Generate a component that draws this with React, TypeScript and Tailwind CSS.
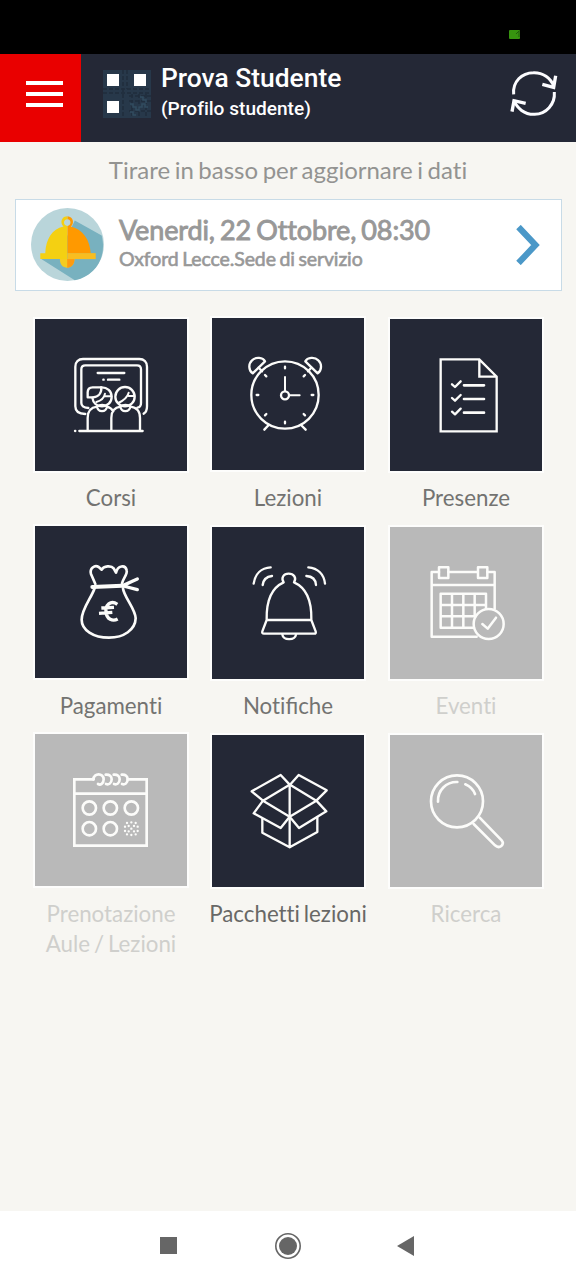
import { Fragment } from 'react';
import type { ReactNode } from 'react';

function StudentsIcon() {
  return (
    <g strokeWidth="7">
      <path d="M181 312 C162 312 151 304 151 289 V170 C151 156 160 147 174 147 H343 C357 147 366 156 366 170 V289 C366 301 364 307 356 311" />
      <path d="M190 294 C175 293 169 289 169 279 V178 C169 170 173 166 181 166 H336 C344 166 348 170 348 178 V279 C348 287 345 292 337 293" />
      <path d="M218 189 H298 M249 209 H283 M163 363 H353 M150 363 H151 M235 209 H236" />
      <path d="M188 361 V324 C188 303 199 292 216 290 M246 290 C254 292 261 297 265 304 M259 361 V324 C259 303 270 292 287 290 M316 290 C334 292 345 303 345 324 V361" />
      <path d="M216 290 C219 308 243 308 246 290 C239 283 224 283 216 290 Z M286 290 C289 308 313 308 316 290 C309 283 294 283 286 290 Z" />
      <path d="M228 232 C247 231 260 244 260 260 C260 277 247 289 231 289 C215 289 204 278 202 263" />
      <circle cx="300" cy="260" r="29" />
      <path d="M203 262 H188 V247 C188 238 194 232 203 232 H229 C230 250 220 261 203 262 Z" />
      <path d="M214 276 C227 273 237 266 240 251 M239 259 H259 M280 279 C296 271 308 260 311 248 M311 258 H328" strokeWidth="6" />
    </g>
  );
}

function AlarmIcon() {
  return (
    <g strokeWidth="7">
      <circle cx="246" cy="255" r="101" />
      <circle cx="246" cy="256" r="12" />
      <path d="M246 243 V201 M259 256 H290" strokeWidth="6" />
      <path d="M246 170 V175 M246 335 V340 M161 255 H166 M326 255 H331 M186 195 L190 199 M306 195 L302 199 M186 316 L190 312 M306 316 L302 312" />
      <path d="M197 345 L184 359 M294 345 L308 359 M177 184 L167 173 M315 184 L325 173" />
      <path d="M149 190 L186 154 C180 142 158 140 147 151 C136 161 136 181 149 190 Z M344 190 L307 154 C313 142 335 140 346 151 C357 161 357 181 344 190 Z" />
    </g>
  );
}

function ChecklistIcon() {
  return (
    <g strokeWidth="7">
      <path d="M182 148 H298 L350 200 V364 H182 Z M298 148 V200 H350" strokeLinejoin="miter" />
      <path d="M252 226 H312 M252 267 H312 M252 308 H312" strokeWidth="8" />
      <path d="M216 223 L225 231 L242 214 M216 264 L225 272 L242 255 M216 305 L225 313 L242 296" />
    </g>
  );
}

function MoneyBagIcon() {
  return (
    <g strokeWidth="8">
      <path d="M211 192 L198 162 C193 145 209 134 221 141 L230 149 C236 137 259 136 266 145 L273 158 C278 136 301 133 305 151 C308 163 295 174 291 190" />
      <path d="M209 204 C200 233 170 266 170 299 C170 330 205 353 252 353 C297 353 331 329 332 295 C332 268 296 229 294 205" />
      <path d="M202 201 L292 197" strokeWidth="12" />
      <path d="M292 197 L337 177 M295 198 L337 209 M300 194 L325 182" strokeWidth="10" />
      <path d="M277 253 C257 239 240 256 243 276 C245 298 263 305 278 297 M229 264 L267 262 M222 280 L262 277" strokeWidth="10" strokeLinecap="butt" />
    </g>
  );
}

function RingingIcon() {
  return (
    <g strokeWidth="7">
      <path d="M191 298 C190 247 202 205 242 187 C233 173 242 161 257 161 C272 161 282 173 273 187 C314 205 326 247 325 298 M191 300 H325 L338 334 Q340 341 334 341 H183 Q176 341 178 334 Z" />
      <path d="M238 344 C241 362 276 362 279 344" />
      <path d="M152 191 C156 162 175 144 203 142 M179 195 C181 178 190 170 207 168 M316 142 C345 144 363 163 366 191 M310 168 C328 169 338 179 339 195" />
    </g>
  );
}

function EventsIcon() {
  return (
    <g strokeWidth="7.5">
      <path d="M177 156 H155 V350 H290 M205 156 H293 M322 156 H344 V266 M155 195 H344" />
      <path d="M177 142 H205 V174 H177 Z M294 142 H322 V174 H294 Z" />
      <path d="M182 221 H318 V266 M182 221 V323 H282 M182 255 H318 M182 289 H286 M216 221 V323 M250 221 V323 M284 221 V285" />
      <circle cx="326" cy="312" r="45" />
      <path d="M307 312 L323 326 L348 293" />
    </g>
  );
}

function BookingIcon() {
  return (
    <g strokeWidth="8">
      <path d="M206 154 H148 V353 H365 V154 H308 M148 197 H365" strokeLinejoin="miter" />
      <path d="M205 154 C207 134 235 134 236 154 C236 168 226 172 219 168 M242 140 C254 139 260 145 260 154 C260 166 251 171 243 168 M266 140 C278 139 284 145 284 154 C284 166 275 171 267 168 M290 140 C302 139 308 145 308 154 C308 166 299 171 291 168" />
      <circle cx="193" cy="240" r="20" />
      <circle cx="256" cy="240" r="20" />
      <circle cx="319" cy="240" r="20" />
      <circle cx="193" cy="302" r="20" />
      <circle cx="256" cy="302" r="20" />
      <path d="M319 302 h.1 M319 283 h.1 M319 321 h.1 M300 296 h.1 M338 296 h.1 M300 309 h.1 M338 309 h.1 M311 294 h.1 M327 294 h.1 M311 310 h.1 M327 310 h.1 M306 285 h.1 M332 285 h.1 M306 319 h.1 M332 319 h.1" strokeWidth="7" />
    </g>
  );
}

function BoxIcon() {
  return (
    <g strokeWidth="7">
      <path d="M794 170 L767 141 L680 190 L714 218 Z M795 170 L821 141 L905 187 L874 218 Z" />
      <path d="M714 218 L686 256 L767 300 L794 266 Z M874 218 L904 250 L822 300 L794 266 Z" />
      <path d="M794 170 V358 M712 273 V314 L794 358 L877 312 V268" />
    </g>
  );
}

function SearchIcon() {
  return (
    <g strokeWidth="8">
      <circle cx="231" cy="220" r="78" />
      <path d="M174 221 C172 187 199 161 232 162 M256 169 C270 175 280 185 285 198" />
      <path d="M281 288 L345 352 C358 364 376 350 365 337 L299 269" />
    </g>
  );
}

type Tile = { label: string; view: string; icon: ReactNode; disabled?: boolean; lowered?: boolean; strong?: boolean };

const tiles: Tile[] = [
  { label: 'Corsi', view: '30 27 456 456', icon: <StudentsIcon />, lowered: true },
  { label: 'Lezioni', view: '27 24 456 456', icon: <AlarmIcon /> },
  { label: 'Presenze', view: '30 27 456 456', icon: <ChecklistIcon />, lowered: true },
  { label: 'Pagamenti', view: '30 18 456 456', icon: <MoneyBagIcon /> },
  { label: 'Notifiche', view: '27 21 456 456', icon: <RingingIcon />, lowered: true },
  { label: 'Eventi', view: '30 21 456 456', icon: <EventsIcon />, disabled: true, lowered: true },
  { label: 'Prenotazione Aule / Lezioni', view: '30 18 456 456', icon: <BookingIcon />, disabled: true },
  { label: 'Pacchetti lezioni', view: '561 21 456 456', icon: <BoxIcon />, lowered: true, strong: true },
  { label: 'Ricerca', view: '30 21 456 456', icon: <SearchIcon />, disabled: true, lowered: true },
];

// Only the "fi" pair is set as a ligature; "ti" and "tti" stay separate.
function Label({ text }: { text: string }) {
  return (
    <>
      {text.split('fi').map((part, i) => (
        <Fragment key={i}>
          {i > 0 && <span className="[font-variant-ligatures:normal]">fi</span>}
          {part}
        </Fragment>
      ))}
    </>
  );
}

function MenuTile({ tile }: { tile: Tile }) {
  return (
    <button className="flex w-[156px] flex-col items-center">
      <span className={`flex h-[167px] ${tile.lowered ? 'pt-px' : ''}`}>
        <span className={`size-[156px] border-2 border-[#fdfdfc] ${tile.disabled ? 'bg-[#b9b9b9]' : 'bg-[#242836]'}`}>
          <svg viewBox={tile.view} className="size-[152px]" fill="none" stroke="#fcfcfa" strokeLinecap="round" strokeLinejoin="round">
            {tile.icon}
          </svg>
        </span>
      </span>
      <span
        className={`text-[22.3px] leading-[30px] [word-spacing:-1.8px] ${tile.disabled ? 'text-[#cfcfcc]' : tile.strong ? 'text-[#686866]' : 'text-[#737371]'} ${
          tile.label.startsWith('Prenotazione') ? 'w-[140px]' : 'whitespace-nowrap'
        }`}
      >
        <Label text={tile.label} />
      </span>
    </button>
  );
}

function Header() {
  return (
    <header className="flex h-[88px] bg-[#242836] font-['Roboto',sans-serif] text-white">
      <button className="flex w-[80.5px] flex-col items-center justify-center gap-[7px] bg-[#e90000] pb-[9px] pl-[9px]">
        <span className="h-1 w-[37px] bg-white" />
        <span className="h-1 w-[37px] bg-white" />
        <span className="h-1 w-[37px] bg-white" />
      </button>
      <svg viewBox="0 0 48 48" className="mt-4 ml-[22.5px] size-12" fill="none">
        <path d="M0 0H48V48H0Z" fill="#27384a" />
        <path d="M0 19H48M0 23H48M20 0V48M24 0V19M26 26H48M26 31H48M26 41H48M29 24V46M36 24V46M43 24V46" stroke="#202d3d" strokeWidth="1.5" strokeDasharray="4 2" />
        <path d="M27 34h3v3h3v3h3v-3h3v-3h3v3h3M27 42h3v3h3M37 27h3v3h3v3" stroke="#324c60" strokeWidth="1.5" />
        <path d="M4 4H16V16H4Z M31 4H43V16H31Z M4 31H16V43H4Z" fill="white" />
      </svg>
      <div className="ml-[10px] flex-1 pt-[9px] font-medium">
        <h1 className="text-[26.4px] leading-[30px]">Prova Studente</h1>
        <p className="mt-1 text-[19.1px] leading-6">(Profilo studente)</p>
      </div>
      <svg viewBox="210 205 150 150" className="mt-[14px] mr-4 size-[50px]" fill="none" stroke="#fcfcff" strokeWidth="9">
        <path d="M221 284 C217 246 246 219 280 219 C309 218 332 235 341 259 M343 277 C346 314 318 343 284 344 C253 345 231 326 222 302" />
        <path d="M347 228 L341 263 L307 254 M216 336 L222 303 L257 311" strokeWidth="10" />
      </svg>
    </header>
  );
}

function NextLesson() {
  return (
    <section className="mr-[14px] ml-[15px] flex h-[92px] items-start border border-[#c8dbe7] bg-white text-[#989898]">
      <svg viewBox="0 0 220 220" className="mt-2 ml-[15px] size-[73px]">
        <circle cx="110" cy="110" r="110" fill="#b9d5da" />
        <path d="M132 38 L213 83 C230 150 193 205 132 218 L31 154 L80 145 Z" fill="#78b1bf" />
        <path d="M87 154 C87 171 96 180 109 180 C122 180 131 170 131 154 Z" fill="#f4cc21" />
        <path d="M109 154 H131 C131 170 122 180 109 180 Z" fill="#ff9a10" />
        <path fillRule="evenodd" d="M109 25 C92 25 86 46 98 56 C63 63 45 94 43 136 H28 V154 H110 V54 C96 54 96 34 110 34 Z" fill="#f4d012" />
        <path d="M110 25 C127 26 132 46 120 56 C157 65 177 96 180 136 H110 V54 C122 54 122 34 110 34 Z" fill="#ff9900" />
        <path d="M110 136 H195 V154 H110 Z" fill="#f9bd20" />
      </svg>
      <div className="ml-[15px] flex-1 pt-[14px]">
        <h2 className="text-[27px] leading-[32px] tracking-[-0.13px] [word-spacing:-1.6px] whitespace-nowrap [-webkit-text-stroke:0.9px_#989898]">Venerdi, 22 Ottobre, 08:30</h2>
        <p className="text-[19.5px] leading-[26px] tracking-[-0.11px] [word-spacing:-1.3px] whitespace-nowrap [-webkit-text-stroke:0.6px_#989898]">Oxford Lecce.Sede di servizio</p>
      </div>
      <svg viewBox="0 0 24 40" className="mt-[25px] mr-[21px] h-10 w-6 shrink-0" fill="none" stroke="#4b98c8" strokeWidth="6.2">
        <path d="M2.5 2 L19.5 20 L2.5 38" />
      </svg>
    </section>
  );
}

export default function App() {
  return (
    <div className="flex h-[1280px] w-[576px] flex-col overflow-hidden bg-[#f7f6f2] font-['Lato',sans-serif] [font-variant-ligatures:none]">
      <div className="flex h-[54px] items-start justify-end bg-black pt-[30px] pr-14">
        <svg viewBox="0 0 11 9" className="h-[9px] w-[11px]">
          <rect width="11" height="9" rx="1" fill="#37940f" />
          <path d="M7 4 L10 1 V7" fill="none" stroke="#205d0c" />
        </svg>
      </div>
      <Header />
      <main className="flex flex-1 flex-col">
        <p className="h-[57px] pt-[13px] text-center text-[24px] leading-[30px] [word-spacing:-1.6px] whitespace-nowrap text-[#939391]">Tirare in basso per aggiornare i dati</p>
        <NextLesson />
        <div className="mt-[25px] grid auto-rows-[208px] grid-cols-[177px_178px_156px] items-start pl-[33px]">
          {tiles.map((tile) => (
            <MenuTile key={tile.label} tile={tile} />
          ))}
        </div>
      </main>
      <nav className="flex h-[69px] items-center bg-white pl-[160px]">
        <span className="size-[17px] bg-[#666666]" />
        <svg viewBox="0 0 28 28" className="ml-[97px] size-7">
          <circle cx="14" cy="14" r="12.2" fill="none" stroke="#666" strokeWidth="1.6" />
          <circle cx="14" cy="14" r="9" fill="#666" />
        </svg>
        <svg viewBox="0 0 18 20" className="ml-[95px] h-5 w-[18px]">
          <path d="M0 10 L17 0 V20 Z" fill="#666" />
        </svg>
      </nav>
    </div>
  );
}
